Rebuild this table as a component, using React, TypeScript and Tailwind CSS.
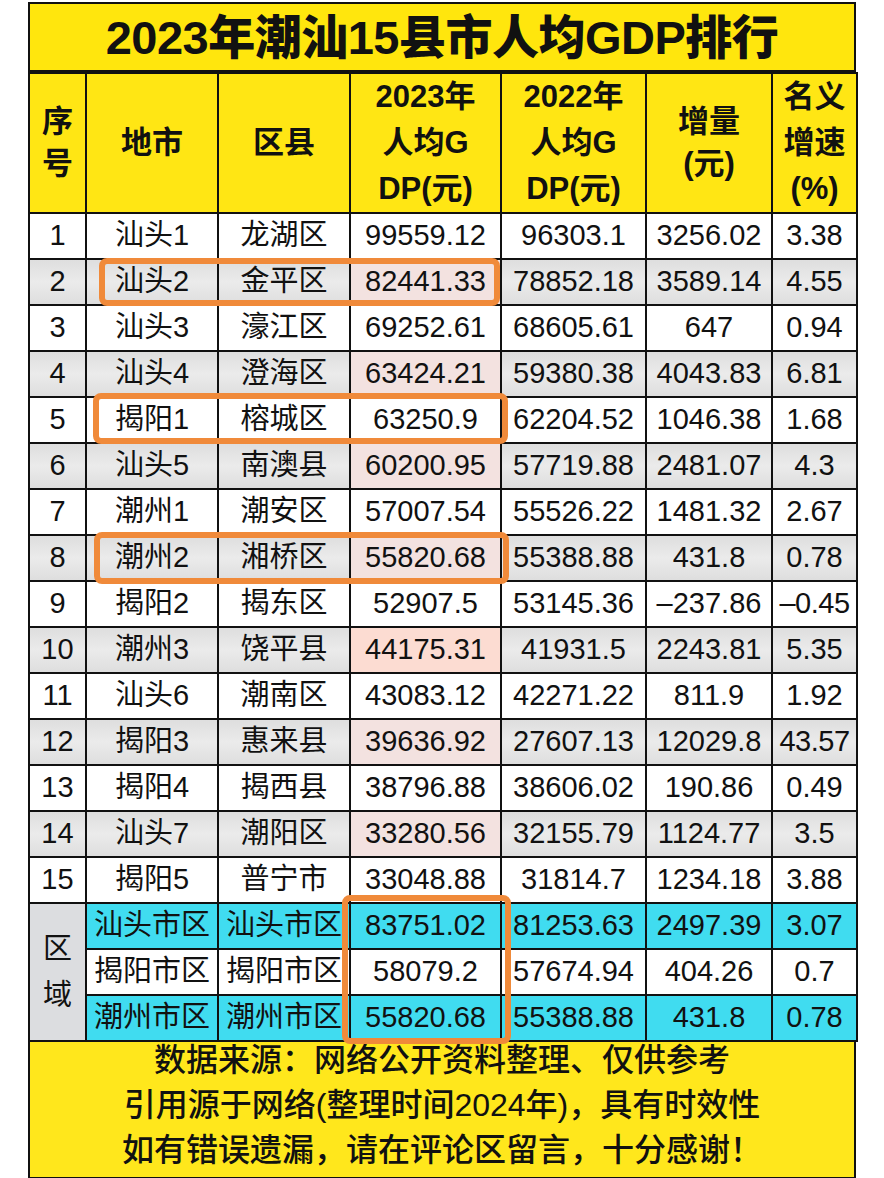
import React from "react";

type Row = [number, string, string, string, string, string, string];

// 县市数据：序号、地市、区县、2023、2022、增量、增速
const rows: Row[] = [
  [1, "汕头1", "龙湖区", "99559.12", "96303.1", "3256.02", "3.38"],
  [2, "汕头2", "金平区", "82441.33", "78852.18", "3589.14", "4.55"],
  [3, "汕头3", "濠江区", "69252.61", "68605.61", "647", "0.94"],
  [4, "汕头4", "澄海区", "63424.21", "59380.38", "4043.83", "6.81"],
  [5, "揭阳1", "榕城区", "63250.9", "62204.52", "1046.38", "1.68"],
  [6, "汕头5", "南澳县", "60200.95", "57719.88", "2481.07", "4.3"],
  [7, "潮州1", "潮安区", "57007.54", "55526.22", "1481.32", "2.67"],
  [8, "潮州2", "湘桥区", "55820.68", "55388.88", "431.8", "0.78"],
  [9, "揭阳2", "揭东区", "52907.5", "53145.36", "–237.86", "–0.45"],
  [10, "潮州3", "饶平县", "44175.31", "41931.5", "2243.81", "5.35"],
  [11, "汕头6", "潮南区", "43083.12", "42271.22", "811.9", "1.92"],
  [12, "揭阳3", "惠来县", "39636.92", "27607.13", "12029.8", "43.57"],
  [13, "揭阳4", "揭西县", "38796.88", "38606.02", "190.86", "0.49"],
  [14, "汕头7", "潮阳区", "33280.56", "32155.79", "1124.77", "3.5"],
  [15, "揭阳5", "普宁市", "33048.88", "31814.7", "1234.18", "3.88"],
];

const regions = [
  { a: "汕头市区", v: ["83751.02", "81253.63", "2497.39", "3.07"], cyan: true },
  { a: "揭阳市区", v: ["58079.2", "57674.94", "404.26", "0.7"], cyan: false },
  { a: "潮州市区", v: ["55820.68", "55388.88", "431.8", "0.78"], cyan: true },
];

const cell = "border-2 border-[#111] text-center align-middle p-0 whitespace-nowrap";
const grayBg = "bg-gradient-to-b from-[#dedede] via-[#ebebeb] to-[#dedede]";

const OrangeBox = ({ className }: { className: string }) => (
  <div className={`pointer-events-none absolute rounded-[8px] border-[6px] border-[#f08a3a] ${className}`} />
);

export default function App() {
  return (
    <div
      className="min-h-[1178px] bg-white pt-[2px] text-[#111]"
      style={{ fontFamily: '"Liberation Sans", "Noto Sans CJK SC", sans-serif' }}
    >
      <div className="relative mx-auto w-[828px]">
        <div className="flex h-[70px] items-center justify-center border-2 border-[#111] bg-[#ffe60d]">
          <h1 className="text-[47px] font-black leading-none tracking-[-0.5px]">2023年潮汕15县市人均GDP排行</h1>
        </div>

        <table className="w-[828px] table-fixed border-collapse">
          <colgroup>
            <col className="w-[57px]" />
            <col className="w-[132px]" />
            <col className="w-[132px]" />
            <col className="w-[151px]" />
            <col className="w-[145px]" />
            <col className="w-[126px]" />
            <col className="w-[85px]" />
          </colgroup>
          <thead>
            <tr className="h-[138px] bg-[#ffe614] text-[31px] font-bold">
              <th className={`${cell} leading-[42px]`}>序<br />号</th>
              <th className={cell}>地市</th>
              <th className={cell}>区县</th>
              <th className={`${cell} leading-[46px]`}>2023年<br />人均G<br />DP(元)</th>
              <th className={`${cell} leading-[46px]`}>2022年<br />人均G<br />DP(元)</th>
              <th className={`${cell} leading-[42px]`}>增量<br />(元)</th>
              <th className={`${cell} leading-[46px]`}>名义<br />增速<br />(%)</th>
            </tr>
          </thead>
          <tbody className="text-[29px]">
            {rows.map((r) => {
              const even = r[0] % 2 === 0;
              const bg = even ? grayBg : "bg-white";
              const pink = r[0] === 10 ? "bg-[#fcdcd2]" : even ? "bg-[#f3e2e0]" : "bg-white";
              return (
                <tr key={r[0]} className="h-[46px]">
                  <td className={`${cell} ${bg}`}>{r[0]}</td>
                  <td className={`${cell} ${bg}`}>{r[1]}</td>
                  <td className={`${cell} ${bg}`}>{r[2]}</td>
                  <td className={`${cell} ${pink}`}>{r[3]}</td>
                  <td className={`${cell} ${bg}`}>{r[4]}</td>
                  <td className={`${cell} ${bg}`}>{r[5]}</td>
                  <td className={`${cell} ${bg} ${r[6].length > 4 ? "tracking-[-0.5px]" : ""}`}>{r[6]}</td>
                </tr>
              );
            })}
            {regions.map((g, i) => {
              const bg = g.cyan ? "bg-[#40dcf0]" : "bg-white";
              return (
                <tr key={g.a} className="h-[46px]">
                  {i === 0 && (
                    <td rowSpan={3} className={`${cell} bg-[#dcdde0] leading-[46px]`}>
                      区<br />域
                    </td>
                  )}
                  <td className={`${cell} ${bg}`}>{g.a}</td>
                  <td className={`${cell} ${bg}`}>{g.a}</td>
                  {g.v.map((v, j) => (
                    <td key={j} className={`${cell} ${bg}`}>{v}</td>
                  ))}
                </tr>
              );
            })}
          </tbody>
        </table>

        <div className="flex h-[137px] flex-col items-center justify-center border-2 border-t-0 border-[#111] bg-[#ffe71c] pb-[8px] text-[32px] font-medium leading-[45px]">
          <p>数据来源：网络公开资料整理、仅供参考</p>
          <p>引用源于网络(整理时间2024年)，具有时效性</p>
          <p>如有错误遗漏，请在评论区留言，十分感谢！</p>
        </div>

        {/* 橙色标注框 */}
        <OrangeBox className="left-[71px] top-[256px] h-[48px] w-[401px]" />
        <OrangeBox className="left-[65px] top-[391px] h-[51px] w-[415px]" />
        <OrangeBox className="left-[66px] top-[530px] h-[52px] w-[415px]" />
        <OrangeBox className="left-[314px] top-[893px] h-[149px] w-[169px]" />
      </div>
    </div>
  );
}
